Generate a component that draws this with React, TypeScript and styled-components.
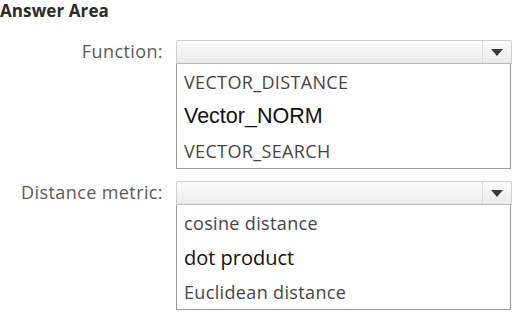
import React from "react";
import styled, { createGlobalStyle } from "styled-components";

const Global = createGlobalStyle`
  html, body { margin: 0; padding: 0; background: #ffffff; }
  body { font-family: "Open Sans", "Noto Sans", sans-serif; }
`;

const Page = styled.div`
  width: 515px;
  height: 312px;
  overflow: hidden;
  display: flex;
  flex-direction: column;
`;

const Title = styled.div`
  font-family: "Open Sans", sans-serif;
  font-weight: 700;
  font-size: 17px;
  letter-spacing: 0.1px;
  color: #2b2b2b;
  line-height: 22px;
  padding-top: 0;
`;

const Group = styled.div<{ $top: number }>`
  display: grid;
  grid-template-columns: 176px 336px;
  margin-top: ${(p) => p.$top}px;
`;

const Label = styled.div`
  font-family: "Open Sans", sans-serif;
  font-size: 18px;
  letter-spacing: 0.4px;
  color: #5a5a5a;
  text-align: right;
  padding-right: 13px;
  line-height: 23px;
`;

const Control = styled.div`
  display: flex;
  flex-direction: column;
`;

const Select = styled.div`
  height: 22px;
  border: 1px solid #cfcfcf;
  border-bottom-color: #bdbdbd;
  border-radius: 2px 2px 0 0;
  background: linear-gradient(#fbfbfb, #ececec);
  display: flex;
  justify-content: flex-end;
`;

const ArrowCell = styled.div`
  width: 28px;
  border-left: 1px solid #dadada;
  display: flex;
  align-items: center;
  justify-content: center;
`;

const List = styled.div`
  width: 333px;
  border: 1px solid #9a9a9a;
  border-top: none;
  background: #fff;
  display: flex;
  flex-direction: column;
`;

const Item = styled.div<{ $big?: boolean; $arial?: boolean }>`
  height: ${(p) => (p.$big ? 34 : 35)}px;
  display: flex;
  align-items: center;
  padding-left: 7px;
  font-family: ${(p) => (p.$arial ? '"Liberation Sans", Arial, sans-serif' : '"Open Sans", sans-serif')};
  font-size: ${(p) => (p.$big ? (p.$arial ? 21.5 : 20) : 18)}px;
  color: ${(p) => (p.$big ? "#111" : "#454545")};
  letter-spacing: ${(p) => (p.$big ? "0" : "0.35px")};
`;

const Arrow = () => (
  <svg width="12" height="7" viewBox="0 0 12 7">
    <polygon points="0,0 12,0 6,7" fill="#3a3a3a" />
  </svg>
);

export default function App() {
  return (
    <Page>
      <Global />
      <Title>Answer Area</Title>
      <Group $top={18}>
        <Label>Function:</Label>
        <Control>
          <Select>
            <ArrowCell>
              <Arrow />
            </ArrowCell>
          </Select>
          <List>
            <Item>VECTOR_DISTANCE</Item>
            <Item $big $arial>Vector_NORM</Item>
            <Item>VECTOR_SEARCH</Item>
          </List>
        </Control>
      </Group>
      <Group $top={12}>
        <Label>Distance metric:</Label>
        <Control>
          <Select>
            <ArrowCell>
              <Arrow />
            </ArrowCell>
          </Select>
          <List>
            <Item>cosine distance</Item>
            <Item $big>dot product</Item>
            <Item>Euclidean distance</Item>
          </List>
        </Control>
      </Group>
    </Page>
  );
}
